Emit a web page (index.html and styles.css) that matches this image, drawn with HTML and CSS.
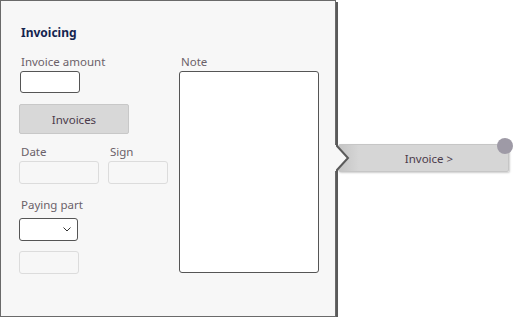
FILE: index.html
```html
<!DOCTYPE html>
<html>
    <head>
        <title>Invoicing</title>
        <meta charset=utf8>
        <link rel="stylesheet" href="styles.css">
    </head>
    <body>
        <div id="stage">
            <div id="panel">
                <h2 class="title">Invoicing</h2>
                <div class="form">
                    <div class="col-left">
                        <label class="label">Invoice amount</label>
                        <div class="input amount"></div>
                        <div class="btn invoices">Invoices</div>
                        <div class="pair">
                            <div class="field">
                                <label class="label">Date</label>
                                <div class="input disabled date"></div>
                            </div>
                            <div class="field">
                                <label class="label">Sign</label>
                                <div class="input disabled sign"></div>
                            </div>
                        </div>
                        <label class="label paying">Paying part</label>
                        <div class="input select">
                            <svg width="8" height="5" viewBox="0 0 8 5"><polyline points="0.5,0.5 4,4 7.5,0.5" fill="none" stroke="#333" stroke-width="1"/></svg>
                        </div>
                        <div class="input disabled extra"></div>
                    </div>
                    <div class="col-right">
                        <label class="label">Note</label>
                        <div class="input note"></div>
                    </div>
                </div>
            </div>
            <div id="exit">
                <div class="btn next">Invoice &gt;</div>
            </div>
            <svg id="notch" width="16" height="32" viewBox="0 0 16 32">
                <polygon points="0,2 3,2 14,15 3,28 0,28" fill="#f7f7f7"/>
                <polyline points="3,0 3,3 14,15 3,27 3,30" fill="none" stroke="#5a5a5a" stroke-width="2"/>
            </svg>
            <div id="dot"></div>
        </div>
    </body>
</html>
```

FILE: styles.css
```css
html {
    font-family: "Noto Sans", sans-serif;
    font-size: 11.5px;
}
body {
    margin: 0;
    padding: 0;
    background-color: white;
}
#stage {
    position: relative;
    display: flex;
    align-items: flex-start;
}
#panel {
    box-sizing: border-box;
    width: 336px;
    height: 317px;
    padding: 23px 0 0 18px;
    background-color: #f7f7f7;
    border: 1px solid #6a6a6a;
    box-shadow: 2px 2px 0 #5a5a5a, 0 6px 4px -1px rgba(0, 0, 0, 0.18);
}
.title {
    margin: 0 0 0 2px;
    font-size: 12px;
    line-height: 17px;
    font-weight: bold;
    color: #14244f;
}
.form {
    display: grid;
    grid-template-columns: 160px 140px;
    margin-top: 13px;
}
.label {
    display: block;
    margin-left: 2px;
    line-height: 16px;
    color: #6b6169;
}
.input {
    box-sizing: border-box;
    background-color: white;
    border: 1px solid #555;
    border-radius: 3px;
}
.input.disabled {
    background-color: #f7f7f7;
    border-color: #dcdcdc;
}
.amount {
    width: 60px;
    height: 22px;
    margin: 1px 0 0 1px;
}
.btn {
    box-sizing: border-box;
    display: flex;
    align-items: center;
    justify-content: center;
    background-color: #d8d8d8;
    border: 1px solid #c8c8c8;
    border-radius: 2px;
    color: #4b3b4b;
}
.invoices {
    width: 110px;
    height: 30px;
    margin-top: 11px;
}
.pair {
    display: flex;
    gap: 9px;
    margin-top: 10px;
}
.date {
    width: 80px;
    height: 23px;
    margin-top: 1px;
}
.sign {
    width: 60px;
    height: 23px;
    margin-top: 1px;
}
.paying {
    margin-top: 13px;
}
.select {
    display: flex;
    align-items: center;
    justify-content: flex-end;
    width: 59px;
    height: 23px;
    margin-top: 5px;
    padding-right: 6px;
}
.extra {
    width: 60px;
    height: 23px;
    margin-top: 10px;
}
.note {
    width: 140px;
    height: 202px;
    margin-top: 1px;
}
#exit {
    margin: 144px 0 0 2px;
}
.next {
    width: 171px;
    height: 28px;
    padding-left: 11px;
    background: linear-gradient(to right, #c4c4c4 0, #d6d6d6 20px);
    border-color: #c6c6c6;
    box-shadow: 1px 1px 2px rgba(0, 0, 0, 0.2);
}
#notch {
    position: absolute;
    left: 334px;
    top: 143px;
}
#dot {
    position: absolute;
    left: 497px;
    top: 138px;
    width: 16px;
    height: 16px;
    border-radius: 50%;
    background-color: #9e9aa6;
}
```
